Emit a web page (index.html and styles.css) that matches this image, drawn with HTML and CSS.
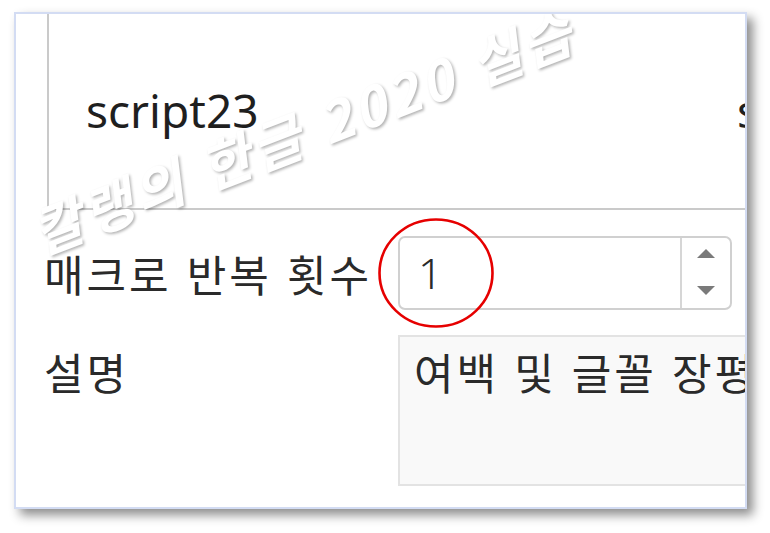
FILE: index.html
```html
<!DOCTYPE html>
<html lang="ko">
<head>
<meta charset="utf-8">
<title>매크로</title>
<link rel="stylesheet" href="styles.css">
</head>
<body>
<div class="frame">
  <div class="list">
    <div class="list-row">
      <span class="cell-name">script23</span>
      <span class="cell-next">script23</span>
    </div>
  </div>
  <div class="form">
    <div class="label">매크로 반복 횟수</div>
    <div class="spin">
      <span class="spin-value">1</span>
      <div class="spin-buttons">
        <span class="tri up"></span>
        <span class="tri down"></span>
      </div>
    </div>
    <div class="label label-top">설명</div>
    <div class="desc">여백 및 글꼴 장평</div>
  </div>
  <svg class="mark-circle" width="118" height="112" viewBox="0 0 118 112">
    <ellipse cx="58" cy="56" rx="56.5" ry="53.5" fill="none" stroke="#e60000" stroke-width="2.6"/>
  </svg>
  <div class="watermark">칼랭의 한글 2020 실습</div>
</div>
</body>
</html>
```
FILE: styles.css
```css
html, body {
  margin: 0;
  background: #ffffff;
}
body {
  padding: 12px 0 0 14px;
  width: 770px;
  height: 533px;
  box-sizing: border-box;
  overflow: hidden;
}
.frame {
  position: relative;
  width: 733px;
  height: 497px;
  box-sizing: border-box;
  border: 2px solid #d3dcf3;
  background: #ffffff;
  overflow: hidden;
  box-shadow: 6px 6px 10px rgba(0, 0, 0, 0.45);
}
.list {
  margin-left: 31px;
  width: 900px;
  height: 196px;
  box-sizing: border-box;
  border-left: 2px solid #cacaca;
  border-bottom: 2px solid #cacaca;
  padding-top: 73px;
}
.list-row {
  display: grid;
  grid-template-columns: 688px auto;
  font-family: "Noto Sans", "Open Sans", sans-serif;
  font-size: 46px;
  line-height: 46px;
  color: #1f1f1f;
  white-space: nowrap;
}
.cell-name {
  padding-left: 37px;
}
.form {
  display: grid;
  grid-template-columns: 354px 600px;
  row-gap: 25px;
  padding-left: 28px;
  margin-top: 26px;
}
.label {
  font-family: "Noto Sans CJK KR", "Noto Sans", sans-serif;
  font-size: 43px;
  line-height: 43px;
  letter-spacing: 3px;
  color: #2a2a2a;
  align-self: center;
  white-space: nowrap;
}
.label-top {
  align-self: start;
  padding-top: 15px;
}
.spin {
  display: flex;
  width: 334px;
  height: 74px;
  box-sizing: border-box;
  border: 2px solid #d0d0d0;
  border-radius: 7px;
  background: #ffffff;
}
.spin-value {
  flex: 1;
  padding-left: 18px;
  font-family: "Noto Sans", "Open Sans", sans-serif;
  font-weight: 300;
  font-size: 43px;
  line-height: 70px;
  color: #2a2a2a;
}
.spin-buttons {
  width: 48px;
  border-left: 2px solid #d6d6d6;
  display: flex;
  flex-direction: column;
  align-items: center;
  padding-top: 11px;
  gap: 28px;
}
.tri {
  width: 0;
  height: 0;
  border-left: 9px solid transparent;
  border-right: 9px solid transparent;
}
.tri.up {
  border-bottom: 9px solid #7a7a7a;
}
.tri.down {
  border-top: 9px solid #7a7a7a;
}
.desc {
  width: 560px;
  height: 151px;
  box-sizing: border-box;
  border: 2px solid #e3e3e3;
  background: #f9f9f9;
  padding: 13px 14px;
  font-family: "Noto Sans CJK KR", "Noto Sans", sans-serif;
  font-size: 43px;
  line-height: 43px;
  letter-spacing: 3px;
  color: #2a2a2a;
  white-space: nowrap;
}
.mark-circle {
  position: absolute;
  left: 362px;
  top: 203px;
}
.watermark {
  position: absolute;
  left: 287px;
  top: 116px;
  transform: translate(-50%, -50%) rotate(-21deg);
  font-family: "Noto Sans CJK KR", sans-serif;
  font-weight: 700;
  font-style: italic;
  font-size: 54px;
  letter-spacing: 4px;
  line-height: 1;
  color: #ffffff;
  white-space: nowrap;
  text-shadow: 1px 2px 3px rgba(0, 0, 0, 0.3);
}
```
